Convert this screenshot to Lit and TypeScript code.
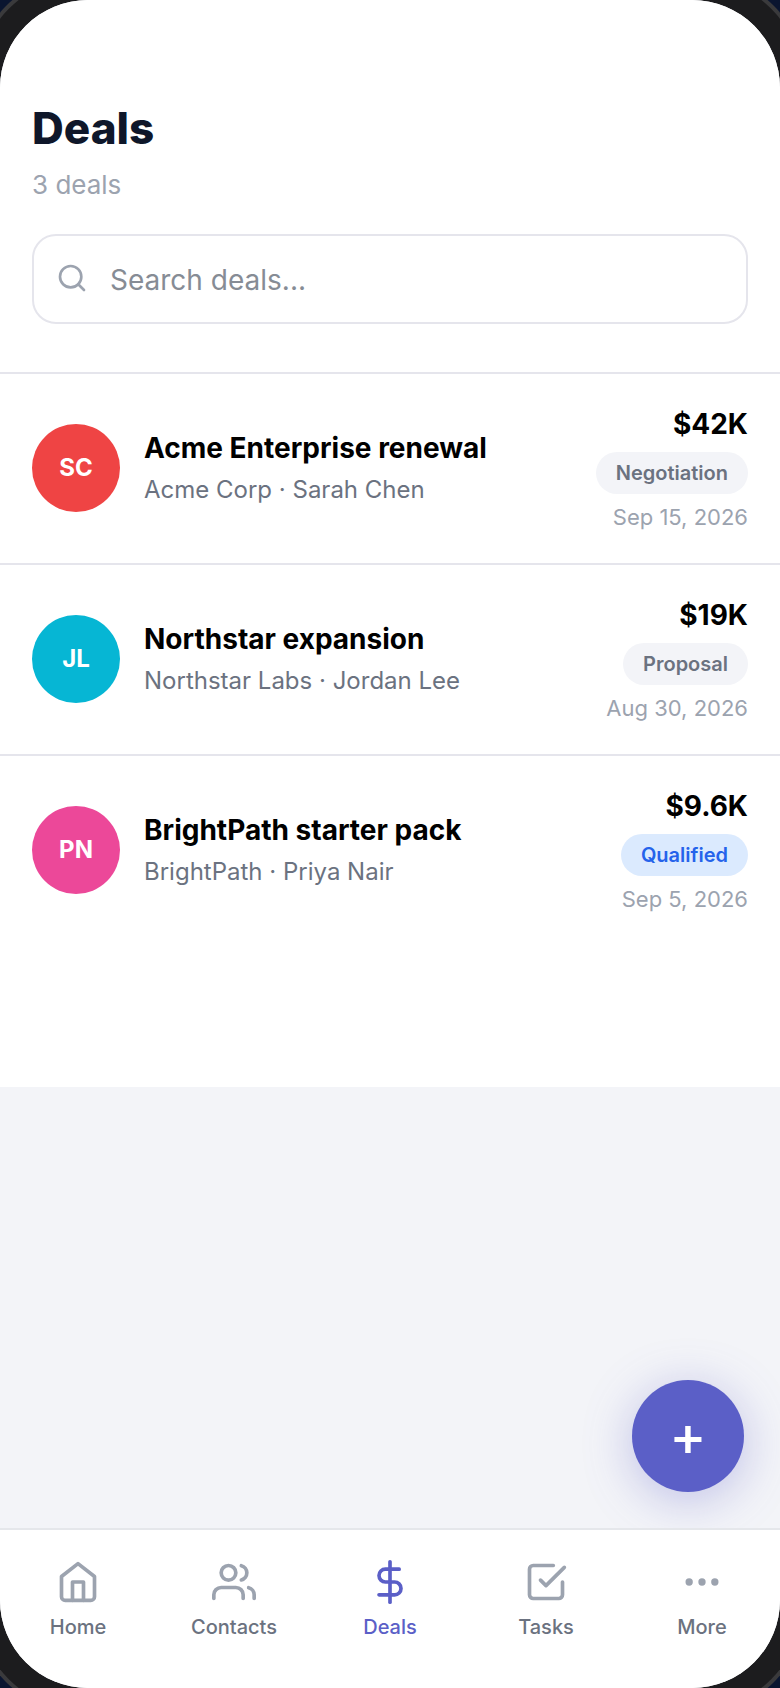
import { LitElement, html, css, svg } from "lit";
import { customElement, property } from "lit/decorators.js";
import { classMap } from "lit/directives/class-map.js";

interface Deal {
  initials: string;
  tone: "red" | "cyan" | "pink";
  name: string;
  company: string;
  contact: string;
  amount: string;
  stage: string;
  closes: string;
}

const DEALS: Deal[] = [
  { initials: "SC", tone: "red", name: "Acme Enterprise renewal", company: "Acme Corp", contact: "Sarah Chen", amount: "$42K", stage: "Negotiation", closes: "Sep 15, 2026" },
  { initials: "JL", tone: "cyan", name: "Northstar expansion", company: "Northstar Labs", contact: "Jordan Lee", amount: "$19K", stage: "Proposal", closes: "Aug 30, 2026" },
  { initials: "PN", tone: "pink", name: "BrightPath starter pack", company: "BrightPath", contact: "Priya Nair", amount: "$9.6K", stage: "Qualified", closes: "Sep 5, 2026" },
];

const TABS = [
  { label: "Home", icon: svg`<path d="M3 9l9-7 9 7v11a2 2 0 0 1-2 2H5a2 2 0 0 1-2-2z"/><path d="M9 22V12h6v10"/>` },
  { label: "Contacts", icon: svg`<path d="M17 21v-2a4 4 0 0 0-4-4H5a4 4 0 0 0-4 4v2"/><circle cx="9" cy="7" r="4"/><path d="M23 21v-2a4 4 0 0 0-3-3.87"/><path d="M16 3.13a4 4 0 0 1 0 7.75"/>` },
  { label: "Deals", icon: svg`<path d="M12 1v22"/><path d="M17 5H9.5a3.5 3.5 0 0 0 0 7h5a3.5 3.5 0 0 1 0 7H6"/>` },
  { label: "Tasks", icon: svg`<path d="M9 11l3 3L22 4"/><path d="M21 12v7a2 2 0 0 1-2 2H5a2 2 0 0 1-2-2V5a2 2 0 0 1 2-2h11"/>` },
  { label: "More", icon: svg`<circle cx="5" cy="12" r="1"/><circle cx="12" cy="12" r="1"/><circle cx="19" cy="12" r="1"/>` },
];

@customElement("deal-row")
class DealRow extends LitElement {
  @property({ attribute: false }) deal!: Deal;

  static styles = css`
    :host {
      display: flex;
      align-items: center;
      gap: 24px;
      padding: 30px 32px 31px;
      border-top: 2px solid #e5e5ec;
    }
    .avatar {
      flex: none;
      display: grid;
      place-items: center;
      width: 88px;
      height: 88px;
      border-radius: 50%;
      color: #fff;
      font-size: 24px;
      line-height: 28px;
      font-weight: 700;
    }
    .red { background: #ef4444; }
    .cyan { background: #06b6d4; }
    .pink { background: #ec4899; }
    .info {
      flex: 1;
      min-width: 0;
      display: flex;
      flex-direction: column;
      gap: 9px;
    }
    .name {
      margin: 0;
      font-size: 28px;
      line-height: 34px;
      font-weight: 700;
      color: #000;
    }
    .who {
      margin: 0;
      font-size: 24px;
      line-height: 32px;
      color: #6b7280;
    }
    .meta {
      display: flex;
      flex-direction: column;
      align-items: flex-end;
      gap: 8px;
      white-space: nowrap;
    }
    .amount {
      font-size: 28px;
      line-height: 40px;
      font-weight: 700;
      color: #000;
    }
    .stage {
      padding: 0 20px;
      border-radius: 21px;
      background: #f3f4f8;
      color: #6b7280;
      font-size: 20px;
      line-height: 42px;
      font-weight: 600;
    }
    .qualified {
      background: #dbeafe;
      color: #2563eb;
    }
    .date {
      font-size: 22px;
      line-height: 30px;
      color: #9ca3af;
    }
  `;

  render() {
    const d = this.deal;
    return html`
      <span class="avatar ${d.tone}">${d.initials}</span>
      <div class="info">
        <h2 class="name">${d.name}</h2>
        <p class="who">${d.company} · ${d.contact}</p>
      </div>
      <div class="meta">
        <span class="amount">${d.amount}</span>
        <span class=${classMap({ stage: true, qualified: d.stage === "Qualified" })}>${d.stage}</span>
        <span class="date">${d.closes}</span>
      </div>
    `;
  }
}

@customElement("app-root")
class AppRoot extends LitElement {
  static styles = css`
    :host {
      display: block;
      overflow: hidden;
      background: #0a1530;
      font-family: Inter, "Liberation Sans", sans-serif;
    }
    .screen {
      position: relative;
      display: flex;
      flex-direction: column;
      min-height: 100vh;
      border-radius: 88px;
      background: #f3f4f8;
      box-shadow: 0 0 0 24px #1c1c1e, 0 0 0 28px #3a3a3c;
    }
    .panel {
      padding-bottom: 142px;
      border-radius: 88px 88px 0 0;
      background: #fff;
    }
    .head {
      padding: 102px 32px 48px;
    }
    .title {
      margin: 0 0 14px;
      font-size: 44px;
      line-height: 52px;
      font-weight: 800;
      color: #0f172a;
    }
    .count {
      margin: 0 0 32px;
      font-size: 26px;
      line-height: 34px;
      color: #9ca3af;
    }
    .search {
      display: flex;
      align-items: center;
      gap: 22px;
      height: 90px;
      box-sizing: border-box;
      padding: 2px 22px 0;
      border: 2px solid #e5e5ec;
      border-radius: 24px;
      background: #fff;
    }
    .glass {
      flex: none;
      width: 32px;
      height: 32px;
      margin-bottom: 4px;
      color: #9ca3af;
    }
    .field {
      flex: 1;
      min-width: 0;
      padding: 0;
      border: 0;
      outline: 0;
      background: none;
      font: 28px/36px Inter, "Liberation Sans", sans-serif;
      color: #0f172a;
    }
    .field::placeholder {
      color: #868c95;
      opacity: 1;
    }
    .deals {
      margin: 0;
      padding: 0;
      list-style: none;
    }
    svg {
      display: block;
      fill: none;
      stroke: currentColor;
      stroke-width: 2;
      stroke-linecap: round;
      stroke-linejoin: round;
    }
    .add {
      position: absolute;
      right: 36px;
      bottom: 196px;
      width: 112px;
      height: 112px;
      padding: 0;
      border: 0;
      border-radius: 50%;
      background: #5b5fc7;
      box-shadow: 0 8px 48px rgba(91, 95, 199, 0.35);
      color: #fff;
      font: 500 56px/112px Inter, "Liberation Sans", sans-serif;
    }
    .tabs {
      position: relative;
      display: grid;
      grid-template-columns: repeat(5, 1fr);
      margin-top: auto;
      padding: 30px 0 48px;
      border-top: 2px solid #e5e7eb;
      border-radius: 0 0 88px 88px;
      background: #fff;
    }
    .tab {
      display: flex;
      flex-direction: column;
      align-items: center;
      gap: 10px;
      color: #6b7280;
      font-size: 20px;
      line-height: 26px;
      font-weight: 500;
      text-decoration: none;
    }
    .icon {
      width: 44px;
      height: 44px;
      color: #9ca3af;
    }
    .current,
    .current .icon {
      color: #5b5fc7;
    }
  `;

  render() {
    return html`
      <div class="screen">
        <main class="panel">
          <header class="head">
            <h1 class="title">Deals</h1>
            <p class="count">${DEALS.length} deals</p>
            <label class="search">
              <svg class="glass" viewBox="0 0 24 24" aria-hidden="true"><circle cx="11" cy="11" r="8"/><path d="M21 21l-4.35-4.35"/></svg>
              <input class="field" type="text" placeholder="Search deals..." aria-label="Search deals" />
            </label>
          </header>
          <ul class="deals">
            ${DEALS.map((d) => html`<li><deal-row .deal=${d}></deal-row></li>`)}
          </ul>
        </main>
        <button class="add" type="button" aria-label="Add deal">+</button>
        <nav class="tabs">
          ${TABS.map(
            (t) => html`<a class=${classMap({ tab: true, current: t.label === "Deals" })} href="#${t.label.toLowerCase()}">
              <svg class="icon" viewBox="0 0 24 24" aria-hidden="true">${t.icon}</svg>
              <span>${t.label}</span>
            </a>`
          )}
        </nav>
      </div>
    `;
  }
}
